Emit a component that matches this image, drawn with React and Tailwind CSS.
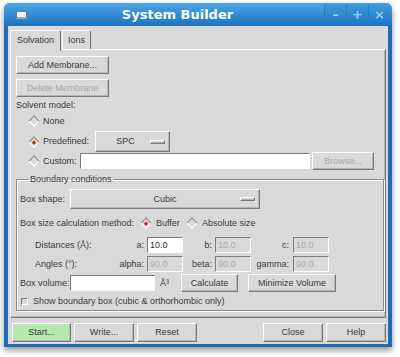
import React from 'react';

const font = { fontFamily: '"Liberation Sans", Arial, sans-serif' };

// raised Tk-style bevel
const raised = 'border border-t-white border-l-white border-b-[#7a7a7a] border-r-[#7a7a7a] shadow-[inset_-1px_-1px_0_#b4b4b4]';
const sunken = 'border border-t-[#7a7a7a] border-l-[#7a7a7a] border-b-white border-r-white';

const Button = ({ children, className = '', disabled }) => (
  <div
    className={`flex items-center justify-center bg-[#d9d9d9] ${raised} ${disabled ? 'text-[#a8a8a8]' : 'text-[#3a3a3a]'} ${className}`}
  >
    {children}
  </div>
);

const Radio = ({ checked }) => (
  <div className="w-[11px] h-[11px] flex items-center justify-center shrink-0">
    <div className="w-[8px] h-[8px] rotate-45 border border-t-[#8a8a8a] border-l-[#8a8a8a] border-b-white border-r-white bg-[#d9d9d9] flex items-center justify-center">
      {checked && <div className="w-[3px] h-[3px] bg-[#e8141b]" />}
    </div>
  </div>
);

const Dropdown = ({ label, className = '' }) => (
  <div className={`relative flex items-center justify-center bg-[#d9d9d9] text-[#3a3a3a] ${raised} ${className}`}>
    <span>{label}</span>
    <div className={`absolute right-[4px] top-1/2 -translate-y-1/2 w-[15px] h-[4px] ${raised}`} />
  </div>
);

const Entry = ({ value, disabled, className = '' }) => (
  <div className={`flex items-center pl-[2px] h-[16px] ${sunken} ${disabled ? 'bg-[#d9d9d9] text-[#a8a8a8]' : 'bg-white text-[#2a2a2a]'} ${className}`}>
    {value}
  </div>
);

export default function App() {
  return (
    <div className="w-[400px] h-[357px] bg-white pt-[3px] pl-[4px] text-[9px] leading-none" style={font}>
      <div className="w-[388px] rounded-t-[6px] bg-[#1e6db3] shadow-[0_3px_6px_rgba(0,0,0,0.45)] pb-[3px]">
        {/* title bar */}
        <div className="h-[23px] flex items-center rounded-t-[6px] bg-gradient-to-b from-[#4aa6e6] to-[#1f72bd]">
          <div className="ml-[12px] w-[11px] h-[8px] bg-[#f4f4f4] border border-[#5a7fa3] border-b-[2px] border-b-[#9aa7b3]" />
          <div
            className="flex-1 text-center text-white font-bold text-[13px] pl-[4px]"
            style={{ fontFamily: '"DejaVu Sans", sans-serif' }}
          >
            System Builder
          </div>
          <div className="flex h-[21px] mr-[2px] self-start mt-[1px]">
            {['–', '+', '×'].map((g) => (
              <div
                key={g}
                className="w-[22px] flex items-center justify-center border-l border-[#2b7cc2] bg-gradient-to-b from-[#3c9ade] to-[#2277c2] text-[#9fcdee] font-bold text-[13px]"
                style={{ fontFamily: '"DejaVu Sans", sans-serif' }}
              >
                {g}
              </div>
            ))}
          </div>
        </div>

        {/* body */}
        <div className="mx-[4px] bg-[#d9d9d9] pt-[2px] px-[2px] text-[#3a3a3a]">
          {/* tabs */}
          <div className="flex items-end h-[21px]">
            <div className="w-[51px] h-[21px] flex items-center justify-center bg-[#d9d9d9] border border-b-0 border-t-white border-l-white border-r-[#6f6f6f] rounded-tr-[3px] relative z-10 -mb-[2px] pb-[1px]">
              Solvation
            </div>
            <div className="w-[29px] h-[19px] flex items-center justify-center bg-[#d9d9d9] border border-b-0 border-t-white border-l-white border-r-[#6f6f6f] rounded-tr-[3px] ml-[1px]">
              Ions
            </div>
          </div>

          {/* notebook panel */}
          <div className={`h-[269px] ${raised} border-t-white pl-[5px] pt-[6px]`}>
            <Button className="w-[93px] h-[18px]">Add Membrane...</Button>
            <Button className="w-[93px] h-[18px] mt-[5px]" disabled>Delete Membrane</Button>
            <div className="h-[17px] flex items-center">Solvent model:</div>
            <div className="h-[14px] flex items-center pl-[12px] gap-[4px]">
              <Radio />
              <span>None</span>
            </div>
            <div className="h-[21px] mt-[3px] flex items-center pl-[12px]">
              <Radio checked />
              <span className="ml-[4px] w-[52px]">Predefined:</span>
              <Dropdown label="SPC" className="w-[75px] h-[21px] pr-[14px]" />
            </div>
            <div className="h-[18px] flex items-center pl-[12px]">
              <Radio />
              <span className="ml-[4px] w-[37px]">Custom:</span>
              <Entry className="w-[230px]" />
              <Button className="w-[62px] h-[18px] ml-[2px]" disabled>Browse...</Button>
            </div>

            {/* boundary conditions */}
            <fieldset className="mt-[3px] w-[368px] h-[138px] border border-[#8a8a8a] shadow-[1px_1px_0_white,inset_1px_1px_0_white] pl-[3px] pr-0 pb-0 pt-0">
              <legend className="ml-[8px] px-[2px] h-[12px] leading-[12px]">Boundary conditions</legend>
              <div className="h-[20px] mt-[4px] flex items-center">
                <span className="w-[50px]">Box shape:</span>
                <Dropdown label="Cubic" className="w-[190px] h-[20px]" />
              </div>
              <div className="h-[14px] mt-[7px] flex items-center">
                <span className="w-[120px]">Box size calculation method:</span>
                <Radio checked />
                <span className="ml-[5px] w-[30px]">Buffer</span>
                <Radio />
                <span className="ml-[5px]">Absolute size</span>
              </div>
              <div className="h-[16px] mt-[7px] flex items-center pl-[15px]">
                <span className="w-[80px]">Distances (Å):</span>
                <span className="w-[29px] text-right">a:</span>
                <Entry value="10.0" className="w-[36px] ml-[3px]" />
                <span className="w-[29px] text-right">b:</span>
                <Entry value="10.0" disabled className="w-[36px] ml-[3px]" />
                <span className="w-[38px] text-right">c:</span>
                <Entry value="10.0" disabled className="w-[36px] ml-[4px]" />
              </div>
              <div className="h-[16px] mt-[3px] flex items-center pl-[15px]">
                <span className="w-[80px]">Angles (°):</span>
                <span className="w-[29px] text-right">alpha:</span>
                <Entry value="90.0" disabled className="w-[36px] ml-[3px]" />
                <span className="w-[29px] text-right">beta:</span>
                <Entry value="90.0" disabled className="w-[36px] ml-[3px]" />
                <span className="w-[38px] text-right">gamma:</span>
                <Entry value="90.0" disabled className="w-[36px] ml-[4px]" />
              </div>
              <div className="h-[18px] mt-[2px] flex items-center">
                <span className="w-[50px]">Box volume:</span>
                <Entry className="w-[85px]" />
                <span className="ml-[5px] w-[21px]">Å³</span>
                <Button className="w-[57px] h-[18px]">Calculate</Button>
                <Button className="w-[88px] h-[18px] ml-[10px]">Minimize Volume</Button>
              </div>
              <div className="h-[16px] mt-[1px] flex items-center pl-[1px]">
                <div className={`w-[7px] h-[7px] ${sunken} bg-[#d9d9d9]`} />
                <span className="ml-[5px]">Show boundary box (cubic &amp; orthorhombic only)</span>
              </div>
            </fieldset>
          </div>

          {/* bottom buttons */}
          <div className="h-[26px] flex items-center pl-[2px] pr-0 pt-[2px]">
            <Button className="w-[59px] h-[19px] !bg-[#b5e8b0]">Start...</Button>
            <Button className="w-[60px] h-[19px] ml-[3px]">Write...</Button>
            <Button className="w-[60px] h-[19px] ml-[3px]">Reset</Button>
            <div className="flex-1" />
            <Button className="w-[60px] h-[19px]">Close</Button>
            <Button className="w-[60px] h-[19px] ml-[3px]">Help</Button>
          </div>
        </div>
      </div>
    </div>
  );
}
